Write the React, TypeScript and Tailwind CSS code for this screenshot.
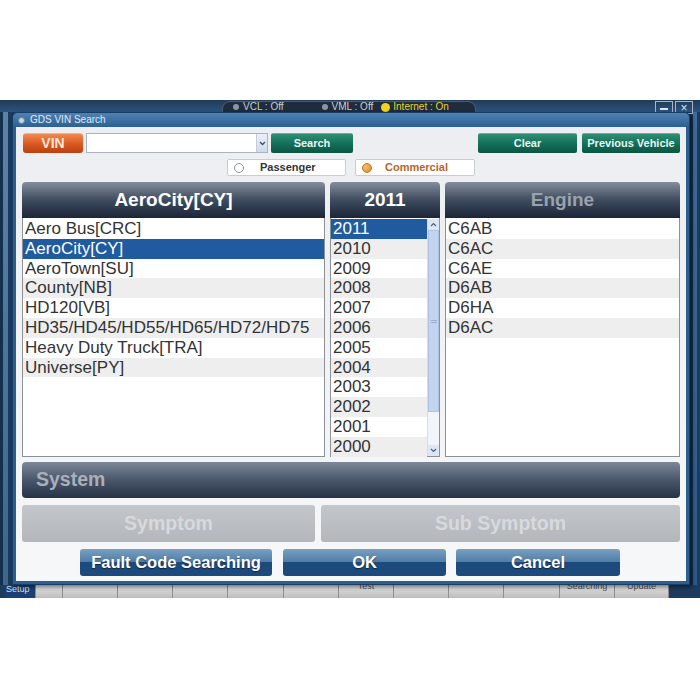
import React from 'react';

const models = [
  'Aero Bus[CRC]',
  'AeroCity[CY]',
  'AeroTown[SU]',
  'County[NB]',
  'HD120[VB]',
  'HD35/HD45/HD55/HD65/HD72/HD75',
  'Heavy Duty Truck[TRA]',
  'Universe[PY]',
];
const years = ['2011', '2010', '2009', '2008', '2007', '2006', '2005', '2004', '2003', '2002', '2001', '2000'];
const engines = ['C6AB', 'C6AC', 'C6AE', 'D6AB', 'D6HA', 'D6AC'];

const taskCells = [
  { w: 'w-[27px]', label: '' },
  { w: 'w-[55px]', label: '' },
  { w: 'w-[55px]', label: '' },
  { w: 'w-[55px]', label: '' },
  { w: 'w-[56px]', label: '' },
  { w: 'w-[55px]', label: '' },
  { w: 'w-[55px]', label: 'Test' },
  { w: 'w-[55px]', label: '' },
  { w: 'w-[55px]', label: '' },
  { w: 'w-[56px]', label: '' },
  { w: 'w-[55px]', label: 'Searching' },
  { w: 'w-[54px]', label: 'Update' },
];

function Row({ text, i, selected }: { text: string; i: number; selected: boolean }) {
  const bg = selected ? 'bg-[#1f5b9e] text-white' : i % 2 === 1 ? 'bg-[#eeeeee] text-[#333]' : 'bg-white text-[#333]';
  return (
    <div className={`h-[19.8px] leading-[19.8px] pl-[2px] text-[17px] whitespace-nowrap overflow-hidden ${bg}`}>
      {text}
    </div>
  );
}

function Header({ text, dim }: { text: string; dim?: boolean }) {
  return (
    <div
      className={`h-[36px] rounded-t-[4px] bg-gradient-to-b from-[#858e9d] via-[#3f4b5e] to-[#1b2638] flex items-center justify-center text-[19px] font-bold ${
        dim ? 'text-[#9aa2ad]' : 'text-white'
      }`}
    >
      {text}
    </div>
  );
}

function GreenBtn({ label, w }: { label: string; w: string }) {
  return (
    <div
      className={`${w} h-[20px] rounded-[2px] border-t border-[#5fb39a] bg-gradient-to-b from-[#2f8f75] via-[#13705a] to-[#0a5542] flex items-center justify-center text-[11px] font-bold text-[#e8f4ef]`}
    >
      {label}
    </div>
  );
}

function BlueBtn({ label, w }: { label: string; w: string }) {
  return (
    <div className={`${w} h-[27px] rounded-[3px] overflow-hidden relative flex flex-col`}>
      <div className="h-[13px] bg-gradient-to-b from-[#7aa0c2] to-[#4f7ca6]" />
      <div className="flex-1 bg-[#1d4a7c]" />
      <div className="absolute inset-0 flex items-center justify-center text-[16.5px] font-bold text-white [text-shadow:0_1px_1px_rgba(0,0,0,0.5)]">
        {label}
      </div>
    </div>
  );
}

export default function App() {
  return (
    <div className="w-[700px] h-[700px] bg-white font-['Liberation_Sans',Arial,sans-serif] overflow-hidden">
      <div className="h-[100px]" />
      <div className="h-[498px] bg-[#1d3b5e] relative flex flex-col">
        {/* top strip */}
        <div className="h-[12px] bg-gradient-to-b from-[#213a57] to-[#2b5580] relative">
          <div className="absolute left-[222px] top-[1px] w-[254px] h-[12px] rounded-t-[8px] bg-[#1e2c3e] border border-[#4b5d72] flex items-center text-[10px] leading-none">
            <span className="ml-[10px] w-[6px] h-[6px] rounded-full bg-[#8b96a3]" />
            <span className="ml-[4px] text-[#c9d0d8]">VCL : Off</span>
            <span className="ml-[38px] w-[6px] h-[6px] rounded-full bg-[#8b96a3]" />
            <span className="ml-[4px] text-[#c9d0d8]">VML : Off</span>
            <span className="ml-[8px] w-[9px] h-[9px] rounded-full bg-[#f2d21a]" />
            <span className="ml-[3px] text-[#e8d22a]">Internet : On</span>
          </div>
          <div className="absolute left-[655px] top-[1px] flex gap-[2px]">
            <div className="w-[18px] h-[13px] border border-[#aab6c4] flex items-center justify-center">
              <span className="w-[8px] h-[1.5px] bg-[#dfe6ee] mt-[3px]" />
            </div>
            <div className="w-[18px] h-[13px] border border-[#aab6c4] flex items-center justify-center text-[#dfe6ee] text-[12px] leading-none">
              ×
            </div>
          </div>
        </div>

        <div className="flex flex-1">
          {/* left frame */}
          <div className="w-[12px] flex">
            <div className="w-[3px] bg-[#15304f]" />
            <div className="w-[5px] bg-gradient-to-b from-[#5c82aa] to-[#3d668f]" />
            <div className="w-[4px] bg-[#1b3a5d]" />
          </div>

          {/* dialog */}
          <div className="w-[678px] h-[473px] rounded-t-[5px] bg-[#2b5f92] border border-[#1a3d63] flex flex-col shadow-[2px_2px_4px_rgba(0,0,0,0.5)] z-10">
            <div className="h-[14px] bg-gradient-to-b from-[#4e82b5] to-[#2c6093] flex items-center pl-[5px] rounded-t-[5px]">
              <span className="w-[7px] h-[7px] rounded-full bg-[#c8d2dc] border border-[#6f8193]" />
              <span className="ml-[5px] text-[10px] text-[#e1e9f2] leading-none">GDS VIN Search</span>
            </div>
            <div className="mx-[3px] mb-[3px] flex-1 bg-gradient-to-b from-[#eceef1] to-[#f6f7f8] px-[6px] pt-[6px] flex flex-col">
              {/* row 1 */}
              <div className="flex h-[20px] items-stretch">
                <div className="ml-[1px] w-[60px] rounded-[3px] bg-gradient-to-b from-[#f08a4e] via-[#dc5a22] to-[#b9410f] border-t border-[#f7b28a] flex items-center justify-center text-[14px] font-bold text-[#fde6d6]">
                  VIN
                </div>
                <div className="ml-[3px] w-[182px] bg-white border border-[#a9b4c0] flex justify-end">
                  <div className="w-[11px] bg-gradient-to-b from-[#eaf0f8] to-[#cfdbea] border-l border-[#c3ccd6] flex items-center justify-center">
                    <svg width="7" height="5" viewBox="0 0 7 5">
                      <path d="M1 1 L3.5 3.5 L6 1" stroke="#3b4f66" strokeWidth="1.3" fill="none" />
                    </svg>
                  </div>
                </div>
                <div className="ml-[3px]">
                  <GreenBtn label="Search" w="w-[82px]" />
                </div>
                <div className="flex-1" />
                <GreenBtn label="Clear" w="w-[99px]" />
                <div className="ml-[5px]">
                  <GreenBtn label="Previous Vehicle" w="w-[98px]" />
                </div>
              </div>

              {/* row 2 */}
              <div className="flex h-[17px] mt-[6px] ml-[205px] gap-[9px]">
                <div className="w-[119px] bg-white border border-[#c9cdd3] rounded-[2px] flex items-center text-[11px] font-bold text-[#333]">
                  <span className="ml-[6px] w-[10px] h-[10px] rounded-full border border-[#8a929c] bg-white" />
                  <span className="ml-[16px]">Passenger</span>
                </div>
                <div className="w-[120px] bg-white border border-[#c9cdd3] rounded-[2px] flex items-center text-[11px] font-bold text-[#b5652a]">
                  <span className="ml-[6px] w-[10px] h-[10px] rounded-full bg-[radial-gradient(circle_at_35%_35%,#f7c06a,#d7891f)] border border-[#c07a25]" />
                  <span className="ml-[13px]">Commercial</span>
                </div>
              </div>

              {/* lists */}
              <div className="flex mt-[6px] gap-[5px]">
                <div className="w-[303px] flex flex-col">
                  <Header text="AeroCity[CY]" />
                  <div className="h-[239px] bg-white border border-[#8c9198] border-t-0 pt-[1px]">
                    {models.map((m, i) => (
                      <Row key={m} text={m} i={i} selected={i === 1} />
                    ))}
                  </div>
                </div>
                <div className="w-[110px] flex flex-col">
                  <Header text="2011" />
                  <div className="h-[239px] bg-white border border-[#8c9198] border-t-0 pt-[1px] flex">
                    <div className="flex-1">
                      {years.map((y, i) => (
                        <Row key={y} text={y} i={i} selected={i === 0} />
                      ))}
                    </div>
                    <div className="w-[12px] flex flex-col bg-[#f1f4f8] border-l border-[#d5dde7]">
                      <div className="h-[11px] flex items-center justify-center bg-[#dde7f4]">
                        <svg width="7" height="5" viewBox="0 0 7 5">
                          <path d="M1 4 L3.5 1.5 L6 4" stroke="#4a6080" strokeWidth="1.2" fill="none" />
                        </svg>
                      </div>
                      <div className="h-[182px] bg-[#c3d4ef] border border-[#aec3e4] flex items-center justify-center">
                        <div className="w-[6px] h-[3px] border-y border-[#98aed2]" />
                      </div>
                      <div className="flex-1" />
                      <div className="h-[11px] flex items-center justify-center bg-[#dde7f4]">
                        <svg width="7" height="5" viewBox="0 0 7 5">
                          <path d="M1 1 L3.5 3.5 L6 1" stroke="#4a6080" strokeWidth="1.2" fill="none" />
                        </svg>
                      </div>
                    </div>
                  </div>
                </div>
                <div className="w-[235px] flex flex-col">
                  <Header text="Engine" dim />
                  <div className="h-[239px] bg-white border border-[#8c9198] border-t-0 pt-[1px]">
                    {engines.map((e, i) => (
                      <Row key={e} text={e} i={i} selected={false} />
                    ))}
                  </div>
                </div>
              </div>

              {/* system */}
              <div className="mt-[5px] h-[36px] rounded-[4px] bg-gradient-to-b from-[#7e8899] via-[#4a566a] to-[#263246] flex items-center pl-[14px] text-[19.5px] font-bold text-[#a9b0bb]">
                System
              </div>

              {/* symptom */}
              <div className="mt-[7px] h-[37px] flex gap-[6px]">
                <div className="w-[293px] rounded-[3px] bg-gradient-to-b from-[#c3c6ca] to-[#b3b6bb] flex items-center justify-center text-[19.5px] font-bold text-[#d7dadd]">
                  Symptom
                </div>
                <div className="flex-1 rounded-[3px] bg-gradient-to-b from-[#c3c6ca] to-[#b3b6bb] flex items-center justify-center text-[19.5px] font-bold text-[#d7dadd]">
                  Sub Symptom
                </div>
              </div>

              {/* buttons */}
              <div className="mt-[7px] flex ml-[58px]">
                <BlueBtn label="Fault Code Searching" w="w-[192px]" />
                <div className="ml-[11px]">
                  <BlueBtn label="OK" w="w-[163px]" />
                </div>
                <div className="ml-[10px]">
                  <BlueBtn label="Cancel" w="w-[164px]" />
                </div>
              </div>
            </div>
          </div>

          {/* right frame */}
          <div className="flex-1 flex">
            <div className="w-[3px] bg-[#16314f]" />
            <div className="w-[4px] bg-gradient-to-b from-[#3f6d9c] to-[#2d5b89]" />
            <div className="flex-1 bg-[#1d3b5e]" />
          </div>
        </div>

        {/* taskbar */}
        <div className="h-[13px] flex bg-[#c9c9c9]">
          <div className="w-[5px] shrink-0 bg-[#1d3b5e]" />
          <div className="w-[30px] shrink-0 bg-[#1c3f74] text-[9px] text-[#d9e3f0] leading-[9px] pl-[1px]">Setup</div>
          {taskCells.map((c, i) => (
            <div
              key={i}
              className={`${c.w} shrink-0 border-l border-[#8f8f8f] bg-gradient-to-b from-[#e4e4e4] to-[#bdbdbd] overflow-hidden text-[9px] text-[#555] leading-none text-center`}
            >
              <div className="-mt-[3px]">{c.label}</div>
            </div>
          ))}
          <div className="flex-1 bg-[#1d3b5e] border-l border-[#8f8f8f]" />
        </div>
      </div>
    </div>
  );
}
